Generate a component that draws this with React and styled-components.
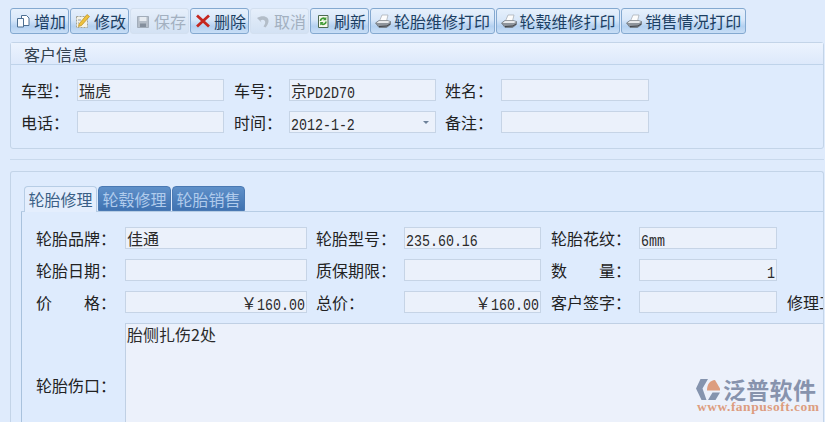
import React from "react";
import styled, { createGlobalStyle } from "styled-components";

const Global = createGlobalStyle`
  html, body {
    margin: 0;
    width: 825px;
    height: 422px;
    overflow: hidden;
    background: #dfebfc;
  }
  body, input, textarea {
    font-family: "Noto Sans CJK SC", "Liberation Sans", sans-serif;
  }
`;

const Page = styled.div`
  width: 825px;
  height: 422px;
  overflow: hidden;
  position: relative;
  padding: 8px 1px 0 10px;
  box-sizing: border-box;
  color: #2a2a2a;
  font-size: 16px;
  line-height: 20px;
`;

const Toolbar = styled.div`
  display: flex;
  gap: 1px;
  height: 26px;
  margin-bottom: 8px;
`;

const ToolButton = styled.div`
  display: flex;
  align-items: center;
  box-sizing: border-box;
  gap: 2px;
  padding: 0 ${(p) => (p.$wide ? 3.5 : 2)}px 1px 3px;
  height: 26px;
  border-radius: 3px;
  white-space: nowrap;
  color: ${(p) => (p.$off ? "#a3b0c0" : "#1c3f63")};
  border: 1px solid ${(p) => (p.$off ? "#d3e0f0" : "#84a9d0")};
  background: ${(p) =>
    p.$off
      ? "linear-gradient(#e6effb, #dbe7f6 55%, #d3e2f4)"
      : "linear-gradient(#e6f0fc 0%, #d8e7f9 45%, #b4d1f1 72%, #c8def6 100%)"};
`;

const Panel = styled.section`
  border: 1px solid #c3d4e8;
  border-radius: 3px;
  background: #deebfd;
`;

const PanelHead = styled.div`
  height: 21px;
  padding-left: 13px;
  line-height: 22px;
  color: #33414f;
  border-bottom: 1px solid #bfd3ea;
  background: linear-gradient(#ecf3fe, #dde9fb);
`;

const CustomerForm = styled.div`
  display: grid;
  grid-template-columns: 56px 147px 65px 147px 65px 148px;
  grid-auto-rows: 22px;
  row-gap: 10px;
  padding: 14px 0 15px 10px;
  align-items: center;
`;

const Label = styled.div`
  display: flex;
  justify-content: ${(p) => (p.$spread ? "space-between" : "flex-start")};
  width: ${(p) => (p.$spread ? "80px" : "auto")};
  padding-left: ${(p) => p.$indent || 0}px;
  white-space: nowrap;
  color: #222;
`;

const Field = styled.div`
  box-sizing: border-box;
  height: 22px;
  line-height: 20px;
  padding: 0 1px;
  position: relative;
  text-align: ${(p) => (p.$right ? "right" : "left")};
  border: 1px solid #c6d4e6;
  background: #ebf1fb;
  color: #2b2b2b;
  white-space: nowrap;
`;

const Latin = styled.span`
  display: inline-block;
  font-family: "Liberation Mono", monospace;
  font-size: 13.3px;
  transform: scaleY(1.18);
`;

const Caret = styled.span`
  position: absolute;
  right: 6px;
  top: 9px;
  border: 3px solid transparent;
  border-top-color: #6d8199;
  border-bottom: 0;
`;

const Divider = styled.div`
  height: 1px;
  margin: 10px 0 11px;
  background: #c9d9ec;
`;

const TabsPanel = styled(Panel)`
  height: 300px;
  border-bottom: 0;
  padding: 14px 0 0 10px;
  overflow: hidden;
`;

const TabStrip = styled.div`
  display: flex;
  gap: 1px;
  height: 25px;
  padding-left: 3px;
  border-bottom: 1px solid #b7cde5;
`;

const Tab = styled.div`
  box-sizing: border-box;
  width: 73px;
  height: ${(p) => (p.$active ? "26px" : "25px")};
  line-height: 25px;
  text-align: center;
  border-radius: 4px 4px 0 0;
  border: 1px solid ${(p) => (p.$active ? "#b7cde5" : "#4a79b3")};
  border-bottom: ${(p) => (p.$active ? "0" : "1px solid #4a79b3")};
  color: ${(p) => (p.$active ? "#3a5f86" : "#b0cbec")};
  background: ${(p) =>
    p.$active ? "#e4eefd" : "linear-gradient(#5f90c9, #3f72b1)"};
`;

const TabBody = styled.div`
  height: 260px;
  border-left: 1px solid #a9c2dd;
  display: grid;
  grid-template-columns: 89px 182px 97px 137px 98px 138px 60px;
  grid-template-rows: 22px 22px 22px 124px;
  row-gap: 10px;
  align-content: start;
  padding: 15px 0 0 14px;
  align-items: center;
`;

const Memo = styled.div`
  grid-column: 2 / -1;
  margin-right: -20px;
  height: 124px;
  box-sizing: border-box;
  padding: 0 1px;
  border: 1px solid #c0d0e4;
  background: #ecf1fb;
  color: #2b2b2b;
`;

const Logo = styled.div`
  position: absolute;
  left: 695px;
  top: 378px;
  width: 122px;
`;

const LogoTop = styled.div`
  display: flex;
  align-items: center;
  gap: 2px;
  height: 23px;
`;

const LogoName = styled.div`
  height: 23px;
  font-size: 23px;
  line-height: 23px;
  font-weight: 700;
  letter-spacing: 0.3px;
  color: #8793ad;
  white-space: nowrap;
`;

const LogoUrl = styled.div`
  font-family: "Liberation Serif", serif;
  font-size: 13.5px;
  line-height: 11px;
  font-weight: 700;
  letter-spacing: 0.5px;
  color: #dd9d7f;
  white-space: nowrap;
  margin: 0 0 0 2px;
`;

const Icon = ({ children }) => (
  <svg width="18" height="18" viewBox="0 0 18 18" style={{ flex: "none" }}>
    {children}
  </svg>
);

const CopyIcon = () => (
  <Icon>
    <path d="M7.500 3.500h5l2.500 2.500v7.500h-7.500z" fill="#fff" stroke="#4d6f92" />
    <path d="M3.500 6.500h6v8.500h-6z" fill="#f6fafe" stroke="#4d6f92" />
  </Icon>
);

const EditIcon = () => (
  <Icon>
    <path d="M2.500 4.500h11v11h-11z" fill="#f4f2e6" stroke="#a3a294" strokeDasharray="2 1" />
    <path d="M5 12l-.5 2.500 3-1 8-9-2.500-2z" fill="#eec23c" stroke="#b88c20" strokeWidth=".7" />
    <path d="M4 8h3M4 11h1" stroke="#8d9bb0" />
  </Icon>
);

const SaveIcon = () => (
  <Icon>
    <path d="M3.500 4.500h11v11h-11z" fill="#b4bdc8" stroke="#a2adba" />
    <path d="M5.500 5h7v4h-7z" fill="#e6ebf1" />
    <path d="M6 11.500h6v3.500h-6z" fill="#848f9d" />
  </Icon>
);

const DeleteIcon = () => (
  <Icon>
    <path d="M3 3.500l12 11M15 3.500l-12 11" stroke="#c5271f" strokeWidth="2.800" />
  </Icon>
);

const UndoIcon = () => (
  <Icon>
    <path d="M3 6c3.500-2 8-2.500 10.500 0 2 2.500 1 6-2 9.500l-2-1c1.500-2.500 2.500-4.500 1-6-1-1-2.500-1-4 0l1 2z" fill="#b3bdc8" />
  </Icon>
);

const RefreshIcon = () => (
  <Icon>
    <path d="M4.500 3.500h9.500v12h-9.500z" fill="#f7f8ee" stroke="#4d6a52" />
    <path d="M6.500 9a2.800 2.800 0 0 1 4.600-2.200M12 9.500a2.800 2.800 0 0 1-4.600 2.200" fill="none" stroke="#3f9a35" strokeWidth="1.600" />
    <path d="M12.300 4.800v3.400h-3.400zM6.200 13.500v-3.400h3.400z" fill="#3f9a35" />
  </Icon>
);

const PrintIcon = () => (
  <Icon>
    <path d="M8 3h6l-1.500 6h-7z" fill="#fcfcfc" stroke="#a3a9b0" strokeWidth=".7" />
    <path d="M1.500 11l3.500-2.500h8l3.500 1v3l-4 3h-7.500z" fill="#8f959c" stroke="#5c6167" strokeWidth=".6" />
    <path d="M2.500 11h11.500l2-1.300-2.800-1h-8z" fill="#e8eaec" />
    <path d="M5 14.500l8-.5 3-2" stroke="#3d4147" fill="none" />
  </Icon>
);

const tools = [
  { text: "增加", icon: <CopyIcon /> },
  { text: "修改", icon: <EditIcon /> },
  { text: "保存", icon: <SaveIcon />, off: true },
  { text: "删除", icon: <DeleteIcon /> },
  { text: "取消", icon: <UndoIcon />, off: true },
  { text: "刷新", icon: <RefreshIcon /> },
  { text: "轮胎维修打印", icon: <PrintIcon />, wide: true },
  { text: "轮毂维修打印", icon: <PrintIcon />, wide: true },
  { text: "销售情况打印", icon: <PrintIcon />, wide: true },
];

export default function App() {
  return (
    <Page>
      <Global />
      <Toolbar>
        {tools.map((t) => (
          <ToolButton key={t.text} $off={t.off} $wide={t.wide}>
            {t.icon}
            {t.text}
          </ToolButton>
        ))}
      </Toolbar>

      <Panel>
        <PanelHead>客户信息</PanelHead>
        <CustomerForm>
          <Label>车型：</Label>
          <Field>瑞虎</Field>
          <Label $indent={10}>车号：</Label>
          <Field>京<Latin>PD2D70</Latin></Field>
          <Label $indent={9}>姓名：</Label>
          <Field />
          <Label>电话：</Label>
          <Field />
          <Label $indent={10}>时间：</Label>
          <Field><Latin>2012-1-2</Latin><Caret /></Field>
          <Label $indent={9}>备注：</Label>
          <Field />
        </CustomerForm>
      </Panel>

      <Divider />

      <TabsPanel>
        <TabStrip>
          <Tab $active>轮胎修理</Tab>
          <Tab>轮毂修理</Tab>
          <Tab>轮胎销售</Tab>
        </TabStrip>
        <TabBody>
          <Label>轮胎品牌：</Label>
          <Field>佳通</Field>
          <Label $indent={9}>轮胎型号：</Label>
          <Field><Latin>235.60.16</Latin></Field>
          <Label $indent={10}>轮胎花纹：</Label>
          <Field><Latin>6mm</Latin></Field>
          <span />

          <Label>轮胎日期：</Label>
          <Field />
          <Label $indent={9}>质保期限：</Label>
          <Field />
          <Label $indent={10}>
            <Label $spread><span>数</span><span>量：</span></Label>
          </Label>
          <Field $right><Latin>1</Latin></Field>
          <span />

          <Label $spread><span>价</span><span>格：</span></Label>
          <Field $right>￥<Latin>160.00</Latin></Field>
          <Label $indent={9}>总价：</Label>
          <Field $right>￥<Latin>160.00</Latin></Field>
          <Label $indent={10}>客户签字：</Label>
          <Field />
          <Label $indent={10}>修理工</Label>

          <Label>轮胎伤口：</Label>
          <Memo>胎侧扎伤2处</Memo>
        </TabBody>
      </TabsPanel>

      <Logo>
        <LogoTop>
          <svg width="26" height="23" viewBox="0 0 26 23" style={{ flex: "none" }}>
            <path d="M1 10.500L5.500 1H13L7.500 10.500L11.500 22H6.500z" fill="#8594ae" />
            <path d="M12 12.500C12 6 15 2.500 20 2L25 10.500V12.500z" fill="#dd9d7f" />
            <path d="M13 22L17.500 14.500H25L20.500 22z" fill="#8594ae" />
          </svg>
          <LogoName>泛普软件</LogoName>
        </LogoTop>
        <LogoUrl>www.fanpusoft.com</LogoUrl>
      </Logo>
    </Page>
  );
}
